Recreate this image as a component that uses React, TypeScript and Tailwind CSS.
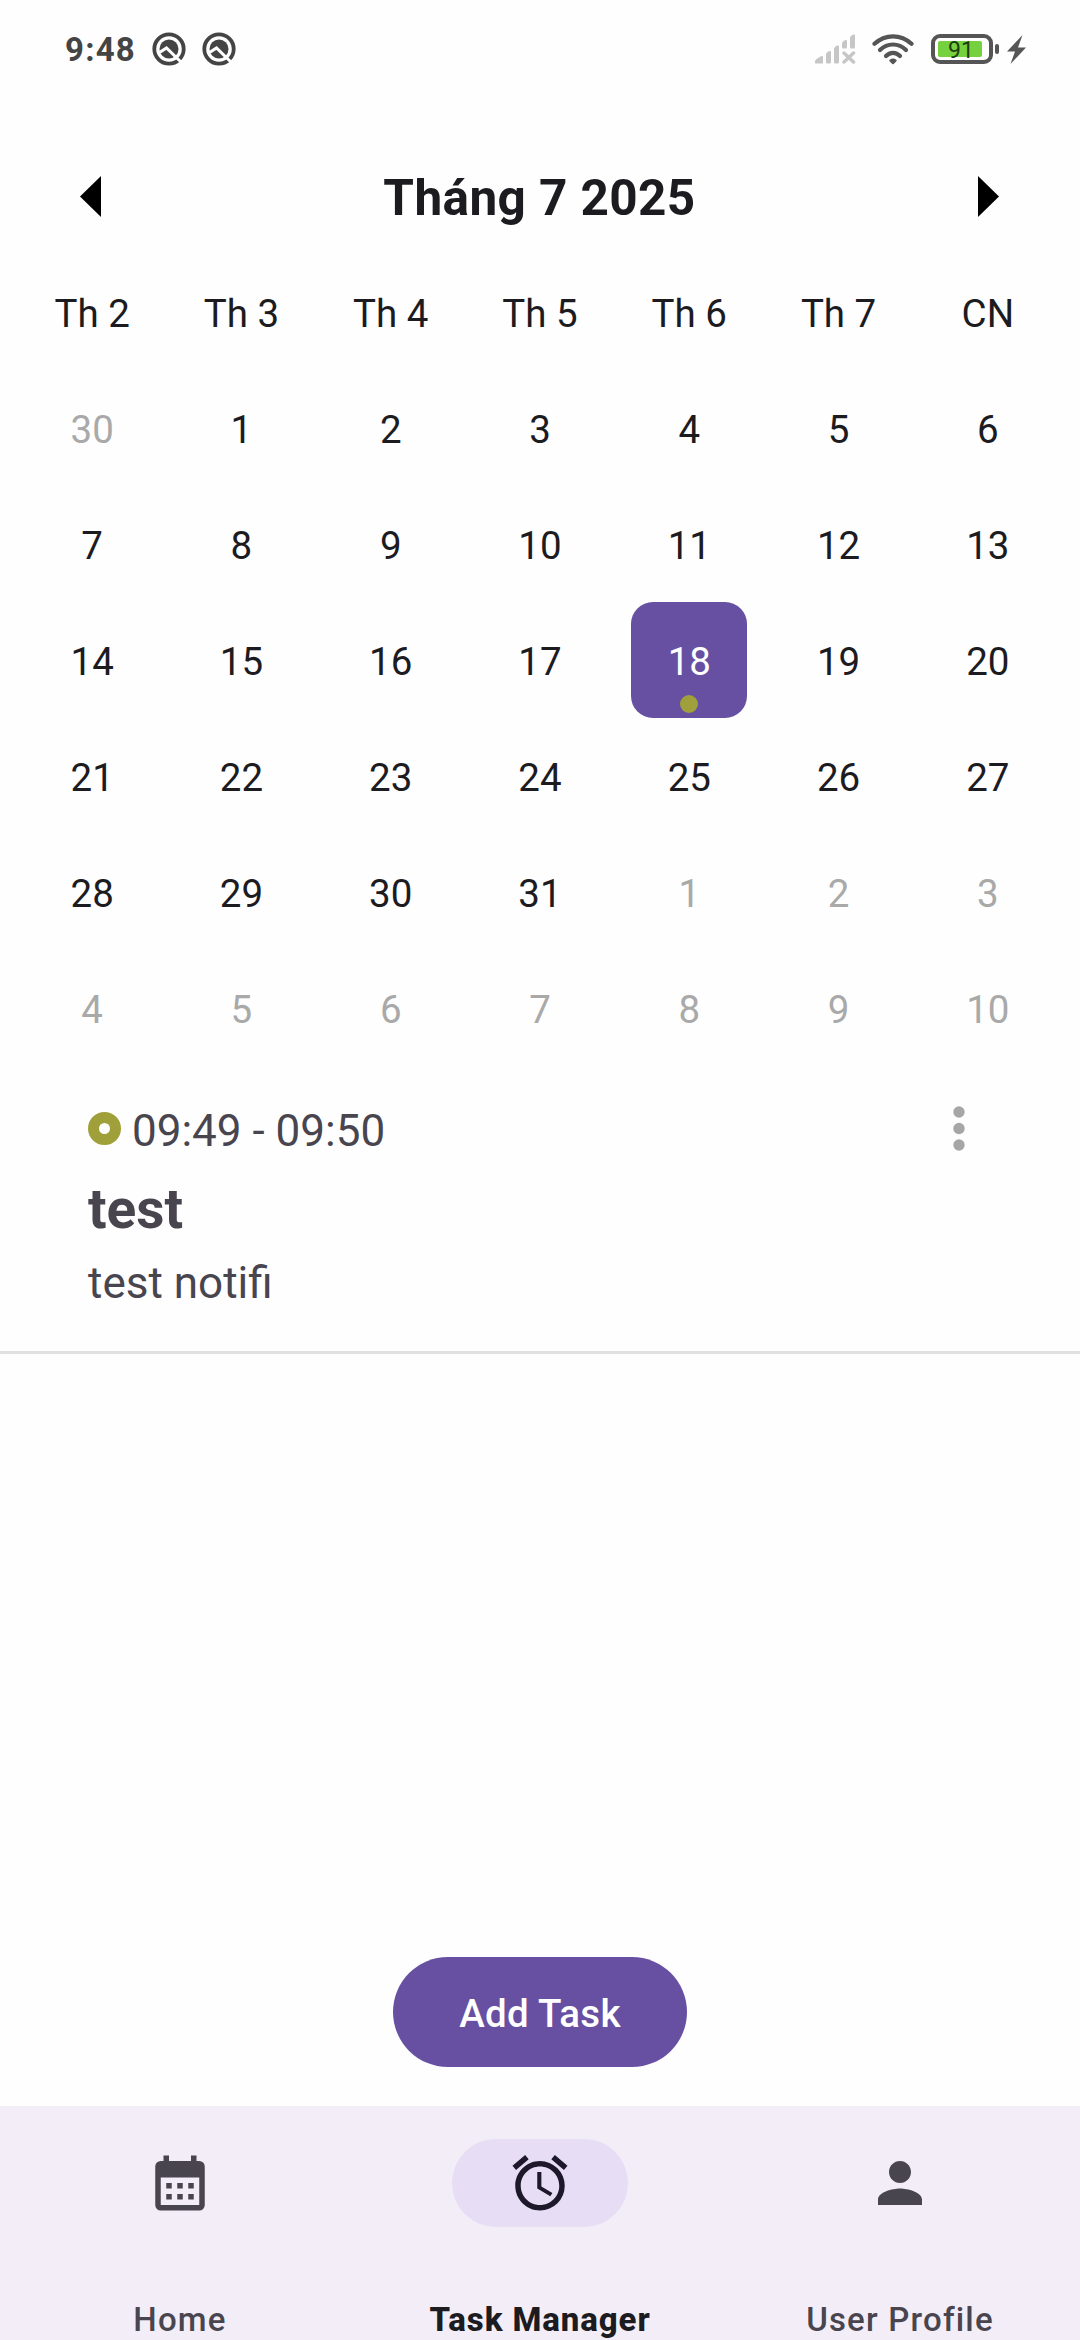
import type { ReactNode } from "react";

const weekdays = ["Th 2", "Th 3", "Th 4", "Th 5", "Th 6", "Th 7", "CN"];

const days: { n: number; out: boolean }[] = [
  { n: 30, out: true },
  ...Array.from({ length: 31 }, (_, i) => ({ n: i + 1, out: false })),
  ...Array.from({ length: 10 }, (_, i) => ({ n: i + 1, out: true })),
];

function AppBadge() {
  return (
    <svg className="h-[34px] w-[34px]" viewBox="0 0 34 34" fill="none">
      <circle cx="17" cy="17" r="14.7" stroke="#444" strokeWidth="3.8" />
      <circle cx="17" cy="17" r="9.5" fill="#444" />
      <path d="M7.500 20.500L14.500 16L31 32" stroke="#fefefe" strokeWidth="3" />
    </svg>
  );
}

function StatusBar() {
  return (
    <header className="flex h-[98px] items-center justify-between pr-[54px] pl-[65px] text-[#444]">
      <div className="flex items-center">
        <span className="w-[87px] pt-[2px] text-[33px] leading-[40px] font-bold tracking-[1.2px]">9:48</span>
        <AppBadge />
        <span className="w-4" />
        <AppBadge />
      </div>
      <div className="flex items-center">
        <svg className="mr-4 h-[30px] w-[41px]" viewBox="0 0 41 30" fill="#c6c6c6">
          <path d="M0 29V27.5Q0 26 1.5 25L6.5 22Q8 21.500 8 23V29.500H1.500Q0 29.500 0 29Z" />
          <path d="M11 20.500Q11 19 12.500 18L14.500 17Q16 16.500 16 18V28Q16 29.500 14.500 29.500H12.500Q11 29.500 11 28Z" />
          <path d="M19 15Q19 13.500 20.500 12.500L22.500 11.500Q24 11 24 12.500V28Q24 29.500 22.500 29.500H20.500Q19 29.500 19 28Z" />
          <path d="M27 9.500Q27 8 28.500 7L30.500 6Q32 5.500 32 7V13Q32 14.500 30.500 14.500H28.500Q27 14.500 27 13Z" />
          <path d="M35 4Q35 2.500 36.500 1.500L38.500 .5Q40 0 40 1.500V13Q40 14.500 38.500 14.500H36.500Q35 14.500 35 13Z" />
          <path d="M29 19L38.500 28M38.500 19L29 28" stroke="#c6c6c6" strokeWidth="3.4" strokeLinecap="round" />
        </svg>
        <svg className="mr-[17px] h-[31px] w-[42px]" viewBox="0 0 42 31" fill="none" stroke="#555" strokeWidth="4.2" strokeLinecap="round">
          <path d="M2.500 9.800Q10.500 2.300 21 2.300T39.500 9.800" />
          <path d="M8 16Q13.500 10.500 21 10.500T34 16" />
          <path d="M14 22Q17 18.800 21 18.800T28 22" />
          <path d="M18.300 26.500Q21 24.500 23.700 26.500L21 29.300Z" fill="#555" strokeWidth="2" strokeLinejoin="round" />
        </svg>
        <div className="flex h-[30px] w-[62px] items-center rounded-[9px] border-4 border-[#555] pl-[3px]">
          <div className="flex h-[16px] w-[44px] items-center justify-center rounded-[2px] bg-[#76d13e] pt-[2px] pl-[2px] text-[23px] leading-none text-[#1f3d10]">
            91
          </div>
        </div>
        <span className="ml-0.5 h-2.5 w-1 rounded-full bg-[#555]" />
        <svg className="ml-[8px] h-[29px] w-[19px]" viewBox="0 0 19 29" fill="#555">
          <path d="M15.500 0L0 16.500H8L3.500 29L19 12.500H11Z" />
        </svg>
      </div>
    </header>
  );
}

function Calendar() {
  return (
    <section>
      <div className="flex h-[156px] items-start justify-between pr-[81px] pl-[80px]">
        <svg className="mt-[78px] h-[41px] w-[21px]" viewBox="0 0 21 41">
          <path d="M21 0V41L0 20.500Z" />
        </svg>
        <h1 className="mt-[71px] text-[49.5px] leading-[58px] font-bold tracking-[0.4px]">Tháng 7 2025</h1>
        <svg className="mt-[78px] h-[41px] w-[21px]" viewBox="0 0 21 41">
          <path d="M0 0V41L21 20.500Z" />
        </svg>
      </div>
      <div className="mx-[17.5px] grid auto-rows-[116px] grid-cols-7 text-[38.5px]">
        {weekdays.map((d) => (
          <div key={d} className="flex items-center justify-center pt-[3px]">
            {d}
          </div>
        ))}
        {days.map((d, i) => {
          const selected = d.n === 18;
          return (
            <div key={i} className="flex items-center justify-center">
              <div
                className={
                  selected
                    ? "relative flex size-[116px] items-center justify-center rounded-[22px] bg-[#6750a2] pt-[3px] text-white"
                    : d.out
                      ? "pt-[3px] text-[#a9a9a9]"
                      : "pt-[3px]"
                }
              >
                {d.n}
                {selected && <span className="absolute bottom-[5px] left-[49px] size-[18px] rounded-full bg-[#9f9f3b]" />}
              </div>
            </div>
          );
        })}
      </div>
    </section>
  );
}

function Task() {
  return (
    <section className="flex h-[288px] justify-between border-b-[3px] border-[#e0e0e0] pt-[36px] pr-[115px] pl-[88px] text-[#49454f]">
      <div className="flex flex-col text-[44px]">
        <div className="flex h-[56px] items-center">
          <span className="mt-[-3px] mr-[11px] size-[33px] rounded-full border-[11px] border-[#a0a03a]" />
          <span className="pt-[2px]">09:49 - 09:50</span>
        </div>
        <h2 className="mt-[19px] text-[55px] leading-[64px] font-bold">test</h2>
        <p className="mt-[14px] leading-[56px]">test notifi</p>
      </div>
      <svg className="mt-[4px] h-[45px] w-[12px]" viewBox="0 0 12 45" fill="#a6a6a6">
        <circle cx="6" cy="6" r="5.700" />
        <circle cx="6" cy="22.500" r="5.700" />
        <circle cx="6" cy="39" r="5.700" />
      </svg>
    </section>
  );
}

function NavItem({ label, active, children }: { label: string; active?: boolean; children: ReactNode }) {
  return (
    <div className={active ? "flex flex-col items-center text-[#1d192b]" : "flex flex-col items-center text-[#49454f]"}>
      <div
        className={
          active
            ? "flex h-[88px] w-[176px] items-center justify-center rounded-full bg-[#e7def6]"
            : "flex h-[88px] w-[176px] items-center justify-center"
        }
      >
        <svg className="size-[66px]" viewBox="0 0 24 24" fill="currentColor">
          {children}
        </svg>
      </div>
      <span
        className={
          active
            ? "mt-[73px] text-[33px] leading-[40px] font-extrabold tracking-[0.9px] text-[#1c1b1f]"
            : "mt-[73px] text-[33px] leading-[40px] font-medium tracking-[1.2px]"
        }
      >
        {label}
      </span>
    </div>
  );
}

export default function App() {
  return (
    <div className="flex h-[2340px] w-[1080px] flex-col overflow-hidden bg-[#fefefe] font-[Roboto,sans-serif] text-[#1c1b1f]">
      <StatusBar />
      <Calendar />
      <Task />
      <main className="flex flex-1 flex-col items-center justify-end pb-[39px]">
        <button className="h-[110px] w-[294px] rounded-full bg-[#6750a2] pt-[3px] text-[38.5px] font-medium tracking-[0.3px] text-white">
          Add Task
        </button>
      </main>
      <nav className="grid h-[234px] grid-cols-3 bg-[#f3edf8] pt-[33px]">
        <NavItem label="Home">
          <path d="M19 4h-1V2h-2v2H8V2H6v2H5a2 2 0 0 0-2 2v14a2 2 0 0 0 2 2h14a2 2 0 0 0 2-2V6a2 2 0 0 0-2-2m0 16H5V10h14zM9 14H7v-2h2zm4 0h-2v-2h2zm4 0h-2v-2h2zm-8 4H7v-2h2zm4 0h-2v-2h2zm4 0h-2v-2h2z" />
        </NavItem>
        <NavItem label="Task Manager" active>
          <path d="M22 5.720l-4.600-3.860-1.290 1.530 4.600 3.860zM7.880 3.390L6.600 1.860 2 5.710l1.290 1.530zM12.500 8H11v6l4.750 2.850.75-1.230-4-2.370zM12 4c-4.970 0-9 4.030-9 9s4.020 9 9 9a9 9 0 0 0 0-18m0 16c-3.870 0-7-3.130-7-7s3.130-7 7-7 7 3.130 7 7-3.130 7-7 7" />
        </NavItem>
        <NavItem label="User Profile">
          <path d="M12 12c2.210 0 4-1.790 4-4s-1.790-4-4-4-4 1.790-4 4 1.790 4 4 4m0 2c-2.670 0-8 1.340-8 4v2h16v-2c0-2.660-5.330-4-8-4" />
        </NavItem>
      </nav>
    </div>
  );
}
